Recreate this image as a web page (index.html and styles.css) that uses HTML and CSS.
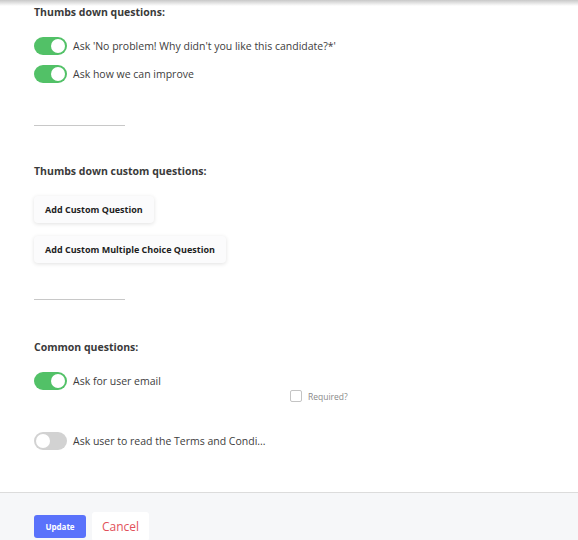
FILE: index.html
```html
<!DOCTYPE html>
<html lang="en">
<head>
    <meta charset="UTF-8">
    <meta name="viewport" content="width=device-width, initial-scale=1.0">
    <title>Feedback Settings</title>
    <link rel="stylesheet" href="styles.css">
</head>
<body>
    <div class="top-shadow"></div>
    <div class="settings">
        <h3 class="section-title">Thumbs down questions:</h3>
        <div class="toggle-row first-row">
            <span class="toggle on"></span>
            <span class="toggle-label">Ask 'No problem! Why didn't you like this candidate?*'</span>
        </div>
        <div class="toggle-row">
            <span class="toggle on"></span>
            <span class="toggle-label">Ask how we can improve</span>
        </div>

        <hr class="divider">

        <h3 class="section-title custom-title">Thumbs down custom questions:</h3>
        <div class="button-list">
            <button class="add-button">Add Custom Question</button>
            <button class="add-button">Add Custom Multiple Choice Question</button>
        </div>

        <hr class="divider second-divider">

        <h3 class="section-title common-title">Common questions:</h3>
        <div class="toggle-row first-row">
            <span class="toggle on"></span>
            <span class="toggle-label">Ask for user email</span>
        </div>
        <label class="required-row">
            <span class="checkbox"></span>
            <span class="required-label">Required?</span>
        </label>
        <div class="toggle-row terms-row">
            <span class="toggle"></span>
            <span class="toggle-label">Ask user to read the Terms and Condi...</span>
        </div>
    </div>

    <div class="footer">
        <button class="update-button">Update</button>
        <button class="cancel-button">Cancel</button>
    </div>
</body>
</html>
```

FILE: styles.css
```css
body {
    margin: 0;
    font-family: "Open Sans", "Liberation Sans", sans-serif;
    color: #333;
    background: #fff;
    height: 540px;
    overflow: hidden;
}

.top-shadow {
    height: 6px;
    margin-bottom: -6px;
    background: linear-gradient(to bottom, #c8c8c8, rgba(255, 255, 255, 0));
}

.settings {
    padding: 4px 0 0 34px;
    height: 492px;
    box-sizing: border-box;
}

.section-title {
    margin: 0;
    font-size: 10.5px;
    line-height: 16px;
    font-weight: 700;
    color: #3a3a3a;
}

.custom-title {
    margin-top: 37px;
}

.common-title {
    margin-top: 39px;
}

.toggle-row {
    display: flex;
    align-items: center;
    height: 18px;
    margin-top: 10px;
}

.first-row {
    margin-top: 17px;
}

.terms-row {
    margin-top: 30px;
}

.toggle {
    position: relative;
    width: 33px;
    height: 18px;
    border-radius: 9px;
    background: #d2d2d2;
    flex-shrink: 0;
}

.toggle::after {
    content: "";
    position: absolute;
    top: 2px;
    left: 2px;
    width: 14px;
    height: 14px;
    border-radius: 50%;
    background: #fff;
}

.toggle.on {
    background: #52c167;
}

.toggle.on::after {
    left: 17px;
}

.toggle-label {
    margin-left: 6px;
    font-size: 10.5px;
    color: #3d3d3d;
}

.divider {
    width: 91px;
    margin: 42px 0 0 0;
    border: none;
    border-top: 1px solid #c8c8c8;
}

.second-divider {
    margin-top: 36px;
}

.button-list {
    display: flex;
    flex-direction: column;
    align-items: flex-start;
    gap: 13px;
    margin-top: 17px;
}

.add-button {
    height: 27px;
    padding: 0 11px;
    font-family: "Open Sans", "Liberation Sans", sans-serif;
    font-size: 9px;
    font-weight: 700;
    color: #1e1e1e;
    background: #fbfbfc;
    border: none;
    border-radius: 4px;
    box-shadow: 0 1px 4px rgba(0, 0, 0, 0.12);
    cursor: pointer;
}

.required-row {
    display: flex;
    align-items: center;
    gap: 6px;
    margin: 0 0 0 256px;
    height: 12px;
}

.checkbox {
    width: 10px;
    height: 10px;
    border: 1px solid #c4c4c4;
    border-radius: 2px;
    background: #fff;
}

.required-label {
    font-size: 8.5px;
    color: #8a8a8a;
}

.footer {
    display: flex;
    align-items: flex-start;
    gap: 6px;
    padding: 19px 0 0 34px;
    height: 48px;
    box-sizing: border-box;
    overflow: hidden;
    background: #f6f7f9;
    border-top: 1px solid #dcdcdc;
}

.update-button {
    margin-top: 3px;
    width: 52px;
    height: 23px;
    font-family: "Open Sans", "Liberation Sans", sans-serif;
    font-size: 8px;
    font-weight: 700;
    color: #fff;
    background: #5a72fb;
    border: none;
    border-radius: 3px;
    cursor: pointer;
}

.cancel-button {
    width: 57px;
    height: 29px;
    font-family: "Open Sans", "Liberation Sans", sans-serif;
    font-size: 12px;
    color: #e2505a;
    background: #fff;
    border: none;
    border-radius: 3px;
    cursor: pointer;
}
```
